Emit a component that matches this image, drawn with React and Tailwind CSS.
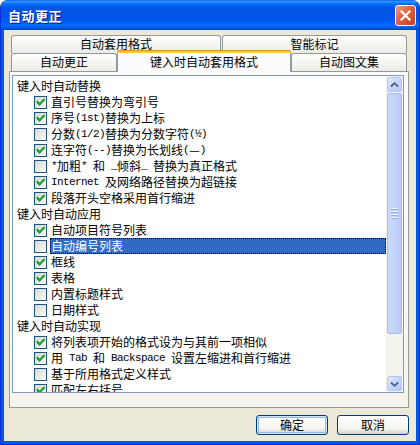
import React from "react";

const rows = [
  { h: "键入时自动替换" },
  { c: true, t: "直引号替换为弯引号" },
  { c: true, t: "序号(1st)替换为上标" },
  { c: false, t: "分数(1/2)替换为分数字符(½)" },
  { c: true, t: "连字符(--)替换为长划线(—)" },
  { c: false, t: "*加粗* 和 _倾斜_ 替换为真正格式" },
  { c: true, t: "Internet 及网络路径替换为超链接" },
  { c: true, t: "段落开头空格采用首行缩进" },
  { h: "键入时自动应用" },
  { c: true, t: "自动项目符号列表" },
  { c: false, t: "自动编号列表", sel: true },
  { c: true, t: "框线" },
  { c: true, t: "表格" },
  { c: false, t: "内置标题样式" },
  { c: false, t: "日期样式" },
  { h: "键入时自动实现" },
  { c: true, t: "将列表项开始的格式设为与其前一项相似" },
  { c: true, t: "用 Tab 和 Backspace 设置左缩进和首行缩进" },
  { c: false, t: "基于所用格式定义样式" },
  { c: true, t: "匹配左右括号" },
];

function Txt({ s }) {
  const parts = s.match(/[\x00-\xff]+|[^\x00-\xff]+/g) || [];
  return parts.map((p, i) =>
    /[\x00-\xff]/.test(p[0]) ? (
      <span key={i} className="font-['Liberation_Mono'] text-[11px] tracking-[-0.6px] whitespace-pre">
        {p}
      </span>
    ) : (
      <span key={i}>{p}</span>
    )
  );
}

function Check({ on }) {
  return (
    <div className="w-[13px] h-[13px] shrink-0 border border-[#1C5180] bg-[linear-gradient(135deg,#D8D8D2_0%,#EDEDE9_60%,#FBFBFA_100%)]">
      {on && (
        <svg width="11" height="11" viewBox="0 0 11 11">
          <polyline points="2.5,5 4.5,7.3 8.8,2.8" fill="none" stroke="#21A121" strokeWidth="2.3" strokeLinecap="square" />
        </svg>
      )}
    </div>
  );
}

function Tab({ w, label }) {
  return (
    <div
      className="h-[18px] shrink-0 flex items-center justify-center border border-b-0 border-[#919B9C] rounded-t-[3px] bg-[linear-gradient(to_bottom,#FFFFFF_0%,#F3F3EF_60%,#ECEBE6_100%)] pb-[1px]"
      style={{ width: w }}
    >
      {label}
    </div>
  );
}

function ScrollBtn({ up }) {
  return (
    <div className="h-[17px] p-[1px] shrink-0">
      <div className="h-full rounded-[2px] border border-[#B4C8F6] bg-[linear-gradient(135deg,#E0E9FE_0%,#C6D5FC_50%,#B4C8F6_100%)] flex items-center justify-center">
        <svg width="9" height="6" viewBox="0 0 9 6">
          <polyline
            points={up ? "1,4.5 4.5,1.2 8,4.5" : "1,1.5 4.5,4.8 8,1.5"}
            fill="none"
            stroke="#4D6185"
            strokeWidth="1.8"
          />
        </svg>
      </div>
    </div>
  );
}

export default function App() {
  return (
    <div className="w-[420px] h-[445px] rounded-t-[8px] overflow-hidden bg-[#0855DD] border-x border-b border-[#0831D9] flex flex-col font-['Noto_Sans_CJK_SC',sans-serif] text-[12px] text-black">
      <div className="h-[30px] shrink-0 -mx-[1px] flex items-center justify-between pl-[8px] pr-[4px] bg-[linear-gradient(to_bottom,#0058EE_0%,#3593FF_4%,#288EFF_7%,#127DFF_10%,#036FFC_14%,#0262EE_20%,#0057E5_25%,#0054E3_50%,#0055EB_62%,#005BF5_72%,#026AFE_82%,#0062EF_90%,#0052D6_95%,#0040AB_100%)] rounded-t-[8px]">
        <span className="text-white font-bold text-[13px] tracking-[0.5px] pt-[1px] [text-shadow:1px_1px_0_#0A1883]">自动更正</span>
        <div className="w-[21px] h-[21px] rounded-[3px] border border-white bg-[linear-gradient(135deg,#F09C81_0%,#E2613D_45%,#C7401C_100%)] flex items-center justify-center">
          <svg width="11" height="11" viewBox="0 0 11 11">
            <path d="M1.5 1.5 L9.5 9.5 M9.5 1.5 L1.5 9.5" stroke="white" strokeWidth="2.2" strokeLinecap="square" />
          </svg>
        </div>
      </div>

      <div className="mx-[3px] h-[411px] bg-[#ECE9D8] flex flex-col pt-[5px]">
        <div className="ml-[7px] w-[396px] flex flex-col">
          <div className="flex gap-[1px] h-[18px]">
            <Tab w={210} label="自动套用格式" />
            <Tab w={185} label="智能标记" />
          </div>
          <div className="flex h-[18px] items-start">
            <Tab w={106} label="自动更正" />
            <div className="relative z-10 w-[174px] h-[22px] -mt-[3px] shrink-0 flex flex-col border-x border-[#919B9C] bg-[#FCFCFE] rounded-t-[3px]">
              <div className="h-[3px] -mx-[1px] bg-[#FFC73C] border-t border-[#E68B2C] rounded-t-[3px]" />
              <div className="flex-1 flex items-center justify-center pb-[1px]">键入时自动套用格式</div>
            </div>
            <Tab w={116} label="自动图文集" />
          </div>
        </div>

        <div className="ml-[5px] w-[400px] h-[337px] shrink-0 border border-[#919B9C] bg-[linear-gradient(to_bottom,#FCFCFE_0%,#F8F8F5_70%,#F4F3EE_100%)] pt-[3px] pl-[2px]">
          <div className="w-[392px] h-[318px] border border-[#7F9DB9] bg-white flex">
            <div className="flex-1 overflow-hidden pt-[2px]">
              {rows.map((r, i) =>
                r.h ? (
                  <div key={i} className="h-[16px] flex items-center pl-[4px] whitespace-nowrap">
                    {r.h}
                  </div>
                ) : (
                  <div key={i} className="h-[16px] flex items-center whitespace-nowrap">
                    <div className="ml-[21px]">
                      <Check on={r.c} />
                    </div>
                    <div
                      className={
                        "ml-[3px] h-[16px] flex items-center pl-[1px] pr-[2px] " +
                        (r.sel ? "flex-1 bg-[#316AC5] text-white outline outline-1 outline-dotted outline-[#000] -outline-offset-1" : "")
                      }
                    >
                      <Txt s={r.t} />
                    </div>
                  </div>
                )
              )}
            </div>
            <div className="w-[17px] shrink-0 flex flex-col bg-[#F4F3EE]">
              <ScrollBtn up />
              <div className="h-[241px] px-[1px] shrink-0">
                <div className="h-full rounded-[2px] border border-[#A9BEEC] bg-[linear-gradient(to_right,#CADAFD_0%,#C3D3FC_50%,#B8CAF5_100%)] flex flex-col items-center justify-center gap-[1px]">
                  {[0, 1, 2, 3].map((k) => (
                    <div key={k} className="w-[7px] h-[2px] border-b border-[#8CB0F8] bg-[#EEF4FE]" />
                  ))}
                </div>
              </div>
              <div className="flex-1" />
              <ScrollBtn />
            </div>
          </div>
        </div>

        <div className="flex justify-end gap-[9px] pr-[7px] mt-[7px]">
          <button className="w-[72px] h-[20px] rounded-[3px] border border-[#003C74] bg-[linear-gradient(to_bottom,#FFFFFF_0%,#F4F4F0_70%,#D6D0C5_100%)] shadow-[inset_0_0_0_1px_#CEE7FF,inset_0_0_0_2px_#98B8EA] flex items-center justify-center">
            确定
          </button>
          <button className="w-[72px] h-[20px] rounded-[3px] border border-[#003C74] bg-[linear-gradient(to_bottom,#FFFFFF_0%,#F4F4F0_70%,#D6D0C5_100%)] flex items-center justify-center">
            取消
          </button>
        </div>
      </div>
    </div>
  );
}
